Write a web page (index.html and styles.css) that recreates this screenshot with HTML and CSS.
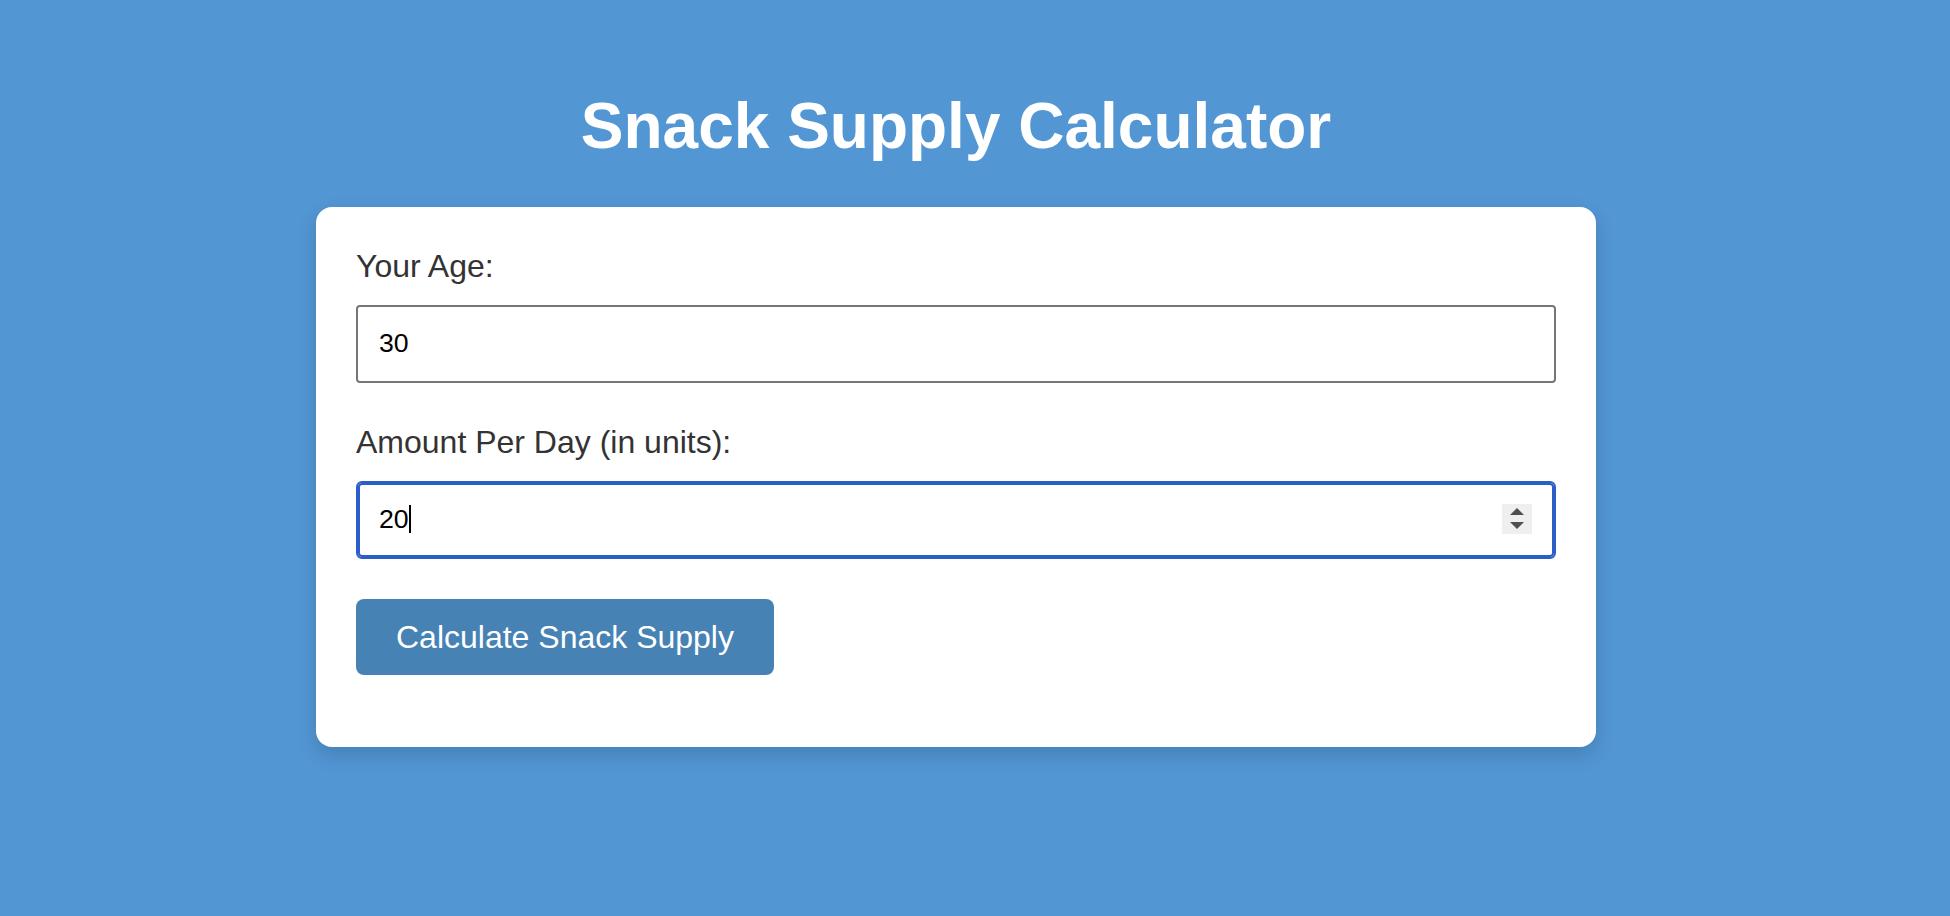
FILE: index.html
```html
<!DOCTYPE html>
<html lang="en">
<head>
<meta charset="utf-8">
<title>Snack Supply Calculator</title>
<link rel="stylesheet" href="styles.css">
</head>
<body>
<div class="page">
  <h1 class="title">Snack Supply Calculator</h1>
  <div class="card">
    <label class="label">Your Age:</label>
    <div class="field"><span class="value">30</span></div>
    <label class="label">Amount Per Day (in units):</label>
    <div class="field field-focused">
      <span class="value">20<span class="caret"></span></span>
      <span class="spinner">
        <svg width="14" height="22" viewBox="0 0 14 22"><polygon points="7,0 14,7 0,7" fill="#4f4f4f"/><polygon points="0,14 14,14 7,21" fill="#4f4f4f"/></svg>
      </span>
    </div>
    <button class="btn">Calculate Snack Supply</button>
  </div>
</div>
</body>
</html>
```

FILE: styles.css
```css
html, body {
  margin: 0;
  padding: 0;
}
body {
  background: #5296d4;
  font-family: "Liberation Sans", Arial, Helvetica, sans-serif;
  min-height: 916px;
}
.page {
  width: 1912px;
  padding-top: 47px;
}
.title {
  margin: 43px 0;
  text-align: center;
  color: #ffffff;
  font-size: 64px;
  font-weight: bold;
  line-height: 73.5px;
}
.card {
  width: 1280px;
  box-sizing: border-box;
  margin: 0 auto;
  background: #ffffff;
  border-radius: 16px;
  padding: 40px 40px 72px;
  box-shadow: 0 8px 20px rgba(0, 0, 0, 0.15);
}
.label {
  display: block;
  font-size: 32px;
  line-height: 38px;
  color: #333333;
  margin-bottom: 20px;
}
.field {
  box-sizing: border-box;
  height: 78px;
  border: 2px solid #767676;
  border-radius: 4px;
  padding: 19px 20px 21px;
  margin-bottom: 40px;
  display: flex;
  align-items: flex-start;
  justify-content: space-between;
  font-size: 26.67px;
  line-height: 34px;
  color: #000000;
}
.field-focused {
  border-color: #2b5fc7;
  box-shadow: inset 0 0 0 2px #2b5fc7;
  border-radius: 6px;
}
.value {
  display: inline-block;
  padding-left: 1px;
}
.caret {
  display: inline-block;
  width: 2px;
  height: 28px;
  background: #000000;
  vertical-align: -5px;
}
.spinner {
  width: 30px;
  height: 30px;
  background: #efefef;
  display: flex;
  align-items: center;
  justify-content: center;
  margin-top: 2px;
  margin-right: 2px;
}
.spinner svg {
  display: block;
}
.btn {
  display: block;
  border: none;
  background: #4682b4;
  color: #ffffff;
  font-family: "Liberation Sans", Arial, Helvetica, sans-serif;
  font-size: 32px;
  line-height: 36.8px;
  padding: 20px 40px;
  border-radius: 8px;
  cursor: pointer;
}
```
